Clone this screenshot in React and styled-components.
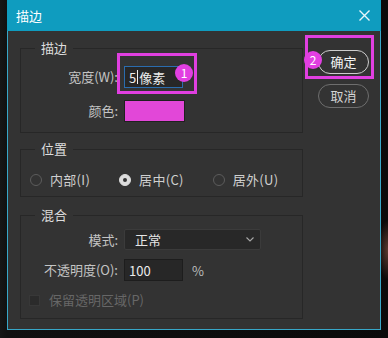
import React from "react";
import styled, { createGlobalStyle } from "styled-components";

const GlobalStyle = createGlobalStyle`
  html, body {
    margin: 0;
    padding: 0;
    background: #0e0e0e;
  }
  body {
    font-family: "Noto Sans CJK SC", "Noto Sans", sans-serif;
  }
`;

const Screen = styled.div`
  width: 388px;
  height: 338px;
  overflow: hidden;
  box-sizing: border-box;
  padding-left: 7px;
  background:
    radial-gradient(ellipse 10px 30px at 388px 250px, #5a3a30 0%, rgba(0, 0, 0, 0) 100%),
    linear-gradient(90deg, #161616 0, #111 7px, #0a0a0a 100%);
`;

const Dialog = styled.div`
  width: 374px;
  height: 330px;
  display: flex;
  flex-direction: column;
`;

const TitleBar = styled.div`
  height: 31px;
  flex: none;
  display: flex;
  align-items: center;
  justify-content: space-between;
  padding: 0 11px 0 9px;
  background: #0f9cbf;
  color: #ffffff;
  font-size: 13px;
`;

const Body = styled.div`
  flex: 1;
  display: flex;
  padding: 9px 0 0 12px;
  background: #333333;
  border: 1px solid #37a7c8;
  border-top: none;
`;

const LeftColumn = styled.div`
  width: 283px;
  display: flex;
  flex-direction: column;
`;

const Group = styled.fieldset`
  margin: ${(p) => p.$gap || 0}px 0 0 0;
  padding: 0;
  min-width: 0;
  box-sizing: border-box;
  height: ${(p) => p.$h}px;
  border: 1px solid #272727;
`;

const Legend = styled.legend`
  margin-left: 14px;
  padding: 0 6px;
  font-size: 13px;
  line-height: 16px;
  color: #dedede;
`;

const FormGrid = styled.div`
  display: grid;
  grid-template-columns: 97px auto;
  column-gap: 6px;
  row-gap: ${(p) => p.$rowGap}px;
  align-items: center;
  justify-items: start;
  padding-top: ${(p) => p.$top}px;
`;

const Label = styled.span`
  justify-self: end;
  font-size: 13px;
  line-height: 16px;
  color: #c4c4c4;
`;

const Marked = styled.div`
  position: relative;
`;

const Highlight = styled.div`
  position: absolute;
  left: ${(p) => p.$l}px;
  top: ${(p) => p.$t}px;
  right: ${(p) => p.$r}px;
  bottom: ${(p) => p.$b}px;
  border: 3px solid #e03fe0;
  pointer-events: none;
`;

const Badge = styled.div`
  position: absolute;
  left: ${(p) => p.$x}px;
  top: ${(p) => p.$y}px;
  width: 18px;
  height: 18px;
  border-radius: 50%;
  background: #e23fe2;
  color: #ffffff;
  font-size: 12px;
  line-height: 18px;
  text-align: center;
`;

const TextBox = styled.div`
  box-sizing: border-box;
  width: ${(p) => p.$w}px;
  height: 22px;
  display: flex;
  align-items: center;
  padding-left: 4px;
  background: #272727;
  border: 1px solid ${(p) => (p.$focused ? "#2a6cae" : "#1d1d1d")};
  color: #ececec;
  font-size: 13px;
`;

const Caret = styled.span`
  width: 1px;
  height: 14px;
  margin: 0 1px;
  background: #f0f0f0;
`;

const Swatch = styled.div`
  box-sizing: border-box;
  width: 61px;
  height: 22px;
  background: #e247d8;
  border: 1px solid #202020;
`;

const Select = styled.div`
  box-sizing: border-box;
  width: 137px;
  height: 21px;
  display: flex;
  align-items: center;
  justify-content: space-between;
  padding: 0 6px 0 10px;
  background: #282828;
  border: 1px solid #3b3b3b;
  border-radius: 2px;
  color: #e6e6e6;
  font-size: 13px;
`;

const InputRow = styled.div`
  display: flex;
  align-items: center;
  gap: 9px;
`;

const Unit = styled.span`
  font-size: 13px;
  color: #bdbdbd;
`;

const RadioRow = styled.div`
  display: flex;
  align-items: center;
  gap: 29px;
  padding: 15px 0 0 9px;
`;

const RadioOption = styled.label`
  display: flex;
  align-items: center;
  gap: 8px;
  font-size: 13px;
  line-height: 16px;
  letter-spacing: 0.3px;
  color: #cfcfcf;
`;

const RadioDot = styled.span`
  box-sizing: border-box;
  width: 12px;
  height: 12px;
  border-radius: 50%;
  display: flex;
  align-items: center;
  justify-content: center;
  border: 1px solid ${(p) => (p.$on ? "#dcdcdc" : "#5c5c5c")};
  background: ${(p) => (p.$on ? "#dcdcdc" : "transparent")};

  &::after {
    content: "";
    display: ${(p) => (p.$on ? "block" : "none")};
    width: 4px;
    height: 4px;
    border-radius: 50%;
    background: #333;
  }
`;

const CheckRow = styled.div`
  display: flex;
  align-items: center;
  gap: 9px;
  padding: 11px 0 0 8px;
  font-size: 13px;
  line-height: 16px;
  color: #676767;
`;

const CheckBox = styled.span`
  box-sizing: border-box;
  width: 11px;
  height: 11px;
  background: #2b2b2b;
  border: 1px solid #383838;
`;

const ButtonColumn = styled.div`
  display: flex;
  flex-direction: column;
  gap: 10px;
  margin: 8px 0 0 15px;
`;

const PillButton = styled.button`
  box-sizing: border-box;
  width: 51px;
  height: 24px;
  padding: 0;
  border-radius: 12px;
  background: transparent;
  border: ${(p) => (p.$primary ? "1.5px solid #cdcdcd" : "1px solid #6e6e6e")};
  color: ${(p) => (p.$primary ? "#f4f4f4" : "#d4d4d4")};
  font-family: inherit;
  font-size: 13px;
  line-height: 16px;
`;

const CloseIcon = () => (
  <svg width="11" height="11" viewBox="0 0 11 11">
    <path d="M0.5 0.5 L10.5 10.5 M10.5 0.5 L0.5 10.5" stroke="#e9f6fa" strokeWidth="1.4" />
  </svg>
);

const Chevron = () => (
  <svg width="8" height="5" viewBox="0 0 8 5">
    <path d="M0.5 0.5 L4 4 L7.5 0.5" stroke="#a8a8a8" strokeWidth="1.1" fill="none" />
  </svg>
);

const positions = [
  { id: "inside", text: "内部(I)" },
  { id: "center", text: "居中(C)", on: true },
  { id: "outside", text: "居外(U)" },
];

const App = () => {
  return (
    <Screen>
      <GlobalStyle />
      <Dialog>
        <TitleBar>
          <span>描边</span>
          <CloseIcon />
        </TitleBar>
        <Body>
          <LeftColumn>
            <Group $h={93}>
              <Legend>描边</Legend>
              <FormGrid $top={10} $rowGap={12}>
                <Label>宽度(W):</Label>
                <Marked>
                  <TextBox $w={59} $focused>
                    5<Caret />像素
                  </TextBox>
                  <Highlight $l={-7} $t={-13} $r={-14} $b={-6} />
                  <Badge $x={51} $y={-2}>1</Badge>
                </Marked>
                <Label>颜色:</Label>
                <Swatch />
              </FormGrid>
            </Group>

            <Group $h={56} $gap={8}>
              <Legend>位置</Legend>
              <RadioRow>
                {positions.map((p) => (
                  <RadioOption key={p.id}>
                    <RadioDot $on={p.on} />
                    {p.text}
                  </RadioOption>
                ))}
              </RadioRow>
            </Group>

            <Group $h={112} $gap={10}>
              <Legend>混合</Legend>
              <FormGrid $top={6} $rowGap={9}>
                <Label>模式:</Label>
                <Select>
                  <span>正常</span>
                  <Chevron />
                </Select>
                <Label>不透明度(O):</Label>
                <InputRow>
                  <TextBox $w={59}>100</TextBox>
                  <Unit>%</Unit>
                </InputRow>
              </FormGrid>
              <CheckRow>
                <CheckBox />
                保留透明区域(P)
              </CheckRow>
            </Group>
          </LeftColumn>

          <ButtonColumn>
            <Marked>
              <PillButton $primary>确定</PillButton>
              <Highlight $l={-13} $t={-13} $r={-5} $b={-5} />
              <Badge $x={-14} $y={3}>2</Badge>
            </Marked>
            <PillButton>取消</PillButton>
          </ButtonColumn>
        </Body>
      </Dialog>
    </Screen>
  );
};

export default App;
